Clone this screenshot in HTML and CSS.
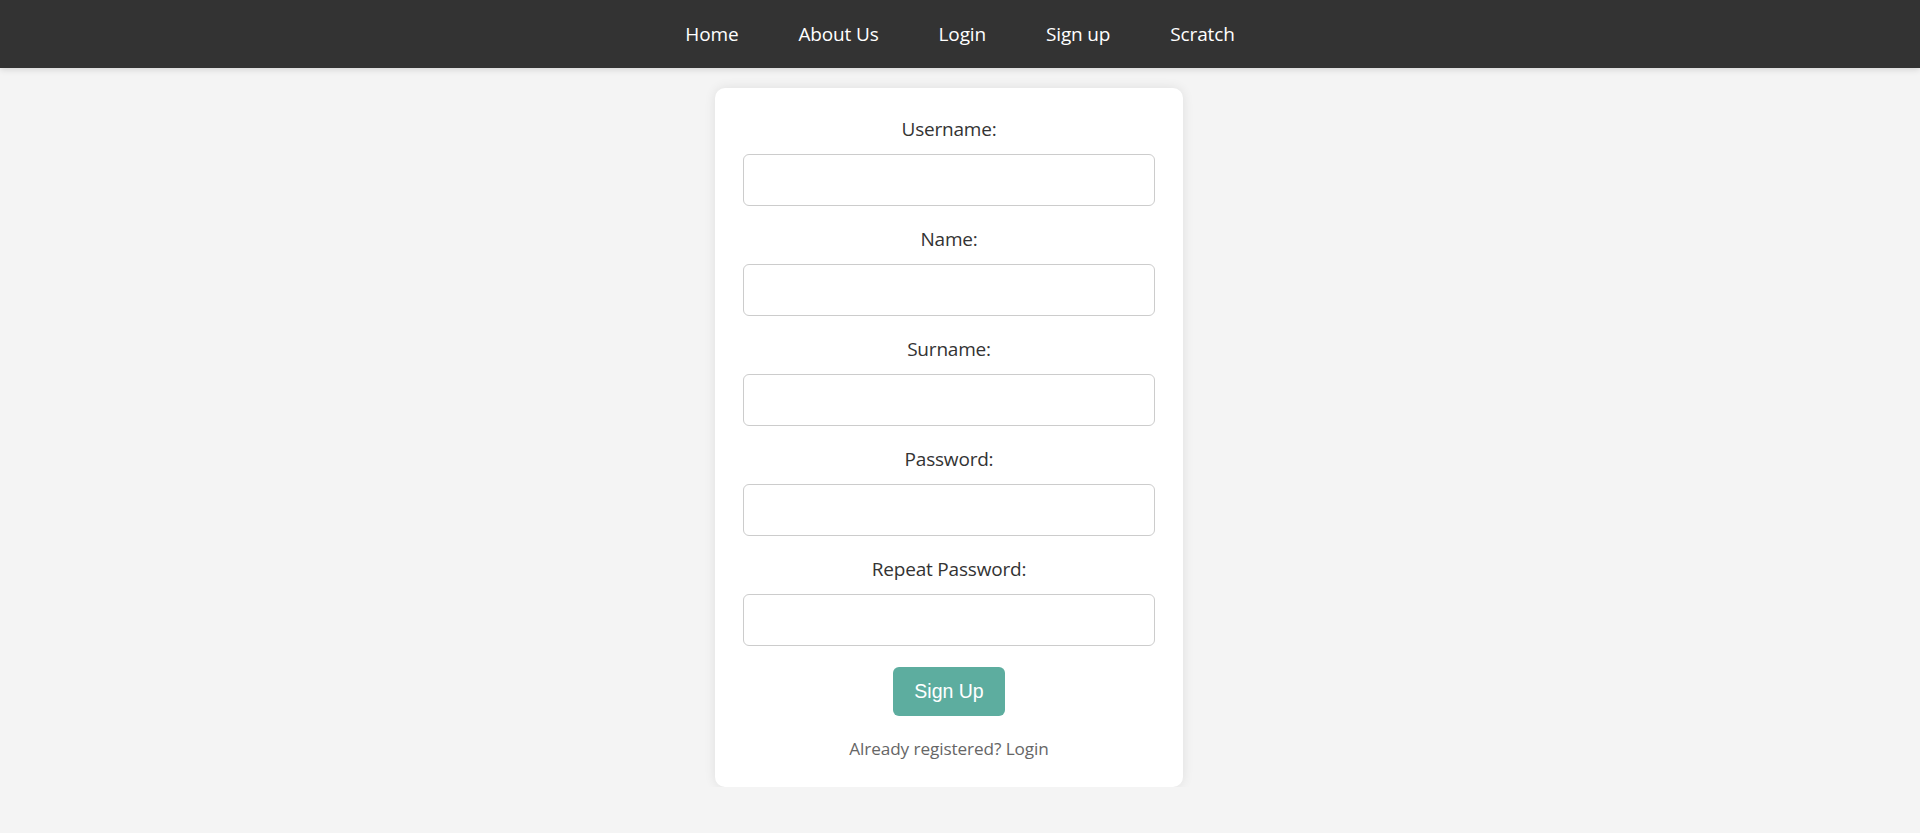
FILE: index.html
```html
<!DOCTYPE html>
<html lang="en">
<head>
<meta charset="utf-8">
<title>Sign up</title>
<link rel="stylesheet" href="styles.css">
</head>
<body>
<nav class="topnav">
  <a href="#" class="nav-link">Home</a>
  <a href="#" class="nav-link">About Us</a>
  <a href="#" class="nav-link">Login</a>
  <a href="#" class="nav-link">Sign up</a>
  <a href="#" class="nav-link">Scratch</a>
</nav>
<main class="page">
  <form class="card">
    <div class="field">
      <label class="field-label" for="username">Username:</label>
      <input class="field-input" id="username" type="text">
    </div>
    <div class="field">
      <label class="field-label" for="name">Name:</label>
      <input class="field-input" id="name" type="text">
    </div>
    <div class="field">
      <label class="field-label" for="surname">Surname:</label>
      <input class="field-input" id="surname" type="text">
    </div>
    <div class="field">
      <label class="field-label" for="password">Password:</label>
      <input class="field-input" id="password" type="password">
    </div>
    <div class="field">
      <label class="field-label" for="repeat">Repeat Password:</label>
      <input class="field-input" id="repeat" type="password">
    </div>
    <button type="button" class="submit-btn">Sign Up</button>
    <p class="login-hint">Already registered? <a href="#" class="login-link">Login</a></p>
  </form>
</main>
</body>
</html>
```
FILE: styles.css
```css
* { box-sizing: border-box; }

html, body {
  margin: 0;
  padding: 0;
}

body {
  background: #f4f4f4;
  font-family: "Open Sans", "Noto Sans", sans-serif;
  color: #333;
}

.topnav {
  height: 68px;
  background: #333333;
  display: flex;
  justify-content: center;
  align-items: center;
  box-shadow: 0 2px 6px rgba(0, 0, 0, 0.12);
  position: relative;
  z-index: 1;
}

.nav-link {
  color: #ffffff;
  text-decoration: none;
  font-size: 19px;
  padding: 0 30px;
  line-height: 68px;
  letter-spacing: -0.15px;
}

.page {
  display: flex;
  justify-content: center;
  padding: 20px 22px 0 0;
}

.card {
  width: 468px;
  background: #ffffff;
  border-radius: 10px;
  box-shadow: 0 0 12px rgba(0, 0, 0, 0.09);
  padding: 28px 28px 26px;
  display: flex;
  flex-direction: column;
  align-items: center;
}

.field {
  width: 100%;
  display: flex;
  flex-direction: column;
  align-items: center;
  margin-bottom: 20px;
}

.field:last-of-type {
  margin-bottom: 21px;
}

.field-label {
  font-size: 19px;
  line-height: 27px;
  color: #333;
  margin-bottom: 11px;
  letter-spacing: -0.2px;
}

.field-input {
  width: 100%;
  height: 52px;
  border: 1px solid #cccccc;
  border-radius: 6px;
  background: #fff;
  font-size: 18px;
  padding: 0 12px;
  outline: none;
}

.submit-btn {
  background: #5dad9f;
  color: #ffffff;
  border: none;
  border-radius: 6px;
  font-family: "Liberation Sans", Arial, sans-serif;
  font-size: 19.5px;
  height: 49px;
  padding: 0 21px;
  cursor: pointer;
}

.login-hint {
  margin: 21px 0 0;
  font-size: 17.2px;
  line-height: 24px;
  color: #666;
  letter-spacing: -0.1px;
}

.login-link {
  color: #666;
  text-decoration: none;
}
```
